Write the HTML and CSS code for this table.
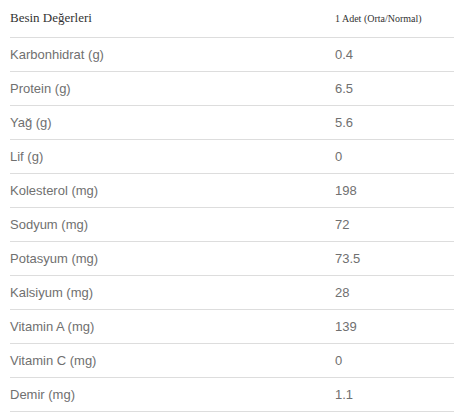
FILE: index.html
```html
<!DOCTYPE html>
<html lang="tr">
<head>
<meta charset="utf-8">
<link rel="stylesheet" href="styles.css">
</head>
<body>
<table class="nutri">
  <thead>
    <tr><th class="name">Besin Değerleri</th><th class="val">1 Adet (Orta/Normal)</th></tr>
  </thead>
  <tbody>
    <tr><td>Karbonhidrat (g)</td><td class="val">0.4</td></tr>
    <tr><td>Protein (g)</td><td class="val">6.5</td></tr>
    <tr><td>Yağ (g)</td><td class="val">5.6</td></tr>
    <tr><td>Lif (g)</td><td class="val">0</td></tr>
    <tr><td>Kolesterol (mg)</td><td class="val">198</td></tr>
    <tr><td>Sodyum (mg)</td><td class="val">72</td></tr>
    <tr><td>Potasyum (mg)</td><td class="val">73.5</td></tr>
    <tr><td>Kalsiyum (mg)</td><td class="val">28</td></tr>
    <tr><td>Vitamin A (mg)</td><td class="val">139</td></tr>
    <tr><td>Vitamin C (mg)</td><td class="val">0</td></tr>
    <tr><td>Demir (mg)</td><td class="val">1.1</td></tr>
  </tbody>
</table>
</body>
</html>
```
FILE: styles.css
```css
html, body { margin: 0; padding: 0; background: #fff; }
body { padding-left: 10px; overflow: hidden; }
.nutri {
  border-collapse: collapse;
  width: 460px;
  font-family: "Liberation Sans", Arial, sans-serif;
  font-size: 13px;
  color: #707070;
}
.nutri th {
  font-family: "Liberation Serif", "Times New Roman", serif;
  font-weight: normal;
  color: #333;
  text-align: left;
  height: 36px;
  padding: 0 0 1px 0;
  border-bottom: 1px solid #ddd;
  vertical-align: middle;
}
.nutri th.name { font-size: 13px; }
.nutri th.val { font-size: 10px; }
.nutri td {
  height: 33px;
  padding: 0;
  border-bottom: 1px solid #ddd;
  vertical-align: middle;
}
.nutri .val { width: 135px; }
```
